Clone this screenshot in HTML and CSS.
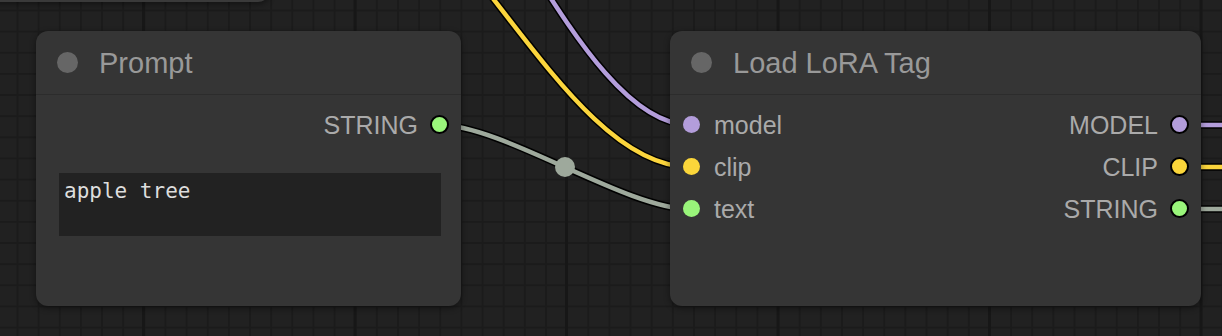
FILE: index.html
```html
<!DOCTYPE html>
<html lang="en">
<head>
<meta charset="UTF-8">
<title>Prompt / Load LoRA Tag</title>
<link rel="stylesheet" href="styles.css">
</head>
<body>
<div class="canvas">
    <!-- links sit under the nodes -->
    <svg class="links" width="1222" height="336" viewBox="0 0 1222 336">
        <g class="outline">
            <path d="M 520 -50 C 565 20, 625 125, 690 125"/>
            <path d="M 462 -40 C 530 40, 605 167, 690 167"/>
            <path d="M 439 125 C 504 125, 625 209, 690 209"/>
            <path d="M 1180 125 H 1240"/>
            <path d="M 1180 167 H 1240"/>
            <path d="M 1180 209 H 1240"/>
        </g>
        <path class="link model" d="M 520 -50 C 565 20, 625 125, 690 125"/>
        <path class="link clip" d="M 462 -40 C 530 40, 605 167, 690 167"/>
        <path class="link string" d="M 439 125 C 504 125, 625 209, 690 209"/>
        <path class="link model" d="M 1180 125 H 1240"/>
        <path class="link clip" d="M 1180 167 H 1240"/>
        <path class="link string" d="M 1180 209 H 1240"/>
        <circle class="link-center" cx="565" cy="167" r="10"/>
    </svg>

    <!-- node above, only its bottom edge shows -->
    <div class="node node-cut"></div>

    <div class="node node-prompt">
        <div class="node-title">
            <span class="title-dot"></span>
            <span class="title-text">Prompt</span>
        </div>
        <div class="node-body">
            <div class="slot-row">
                <div class="slot-in"></div>
                <div class="slot-out">STRING <span class="dot dot-out string"></span></div>
            </div>
            <div class="widget-text">apple tree</div>
        </div>
    </div>

    <div class="node node-lora">
        <div class="node-title">
            <span class="title-dot"></span>
            <span class="title-text">Load LoRA Tag</span>
        </div>
        <div class="node-body">
            <div class="slot-row">
                <div class="slot-in"><span class="dot model"></span> model</div>
                <div class="slot-out">MODEL <span class="dot dot-out model"></span></div>
            </div>
            <div class="slot-row">
                <div class="slot-in"><span class="dot clip"></span> clip</div>
                <div class="slot-out">CLIP <span class="dot dot-out clip"></span></div>
            </div>
            <div class="slot-row">
                <div class="slot-in"><span class="dot string"></span> text</div>
                <div class="slot-out">STRING <span class="dot dot-out string"></span></div>
            </div>
        </div>
    </div>
</div>
</body>
</html>
```

FILE: styles.css
```css
body {
    margin: 0;
    background: #212121;
    font-family: "Liberation Sans", Arial, sans-serif;
}
.canvas {
    position: relative;
    width: 1222px;
    height: 336px;
    overflow: hidden;
    background-color: #212121;
    background-image:
        linear-gradient(90deg, #171717 3px, transparent 3px),
        linear-gradient(90deg, #1b1b1b 2px, transparent 2px),
        linear-gradient(#1b1b1b 2px, transparent 2px);
    background-size: 211.5px 100%, 21.15px 100%, 100% 21.15px;
    background-position: 142px 0, 16.5px 0, 0 9.5px;
}
.links {
    position: absolute;
    left: 0;
    top: 0;
}
.links path {
    fill: none;
}
.outline path {
    stroke: #000;
    stroke-width: 7.5;
}
.link {
    stroke-width: 4.5;
}
.link.model { stroke: #b39ddb; }
.link.clip { stroke: #fbd53c; }
.link.string { stroke: #9ea99c; }
.link-center {
    fill: #9ea99c;
}

.node {
    position: absolute;
    top: 31px;
    height: 275px;
    background: #353535;
    border-radius: 12px;
    box-shadow: 0 2px 6px rgba(0, 0, 0, 0.45);
    display: flex;
    flex-direction: column;
}
.node-cut {
    left: -20px;
    top: -100px;
    width: 290px;
    height: 102px;
    background: #3a3a3a;
}
.node-prompt {
    left: 36px;
    width: 425px;
}
.node-lora {
    left: 670px;
    width: 531px;
}
.node-title {
    height: 64px;
    display: flex;
    align-items: center;
    padding-left: 21px;
    border-bottom: 1px solid #2c2c2c;
    box-sizing: border-box;
    flex-shrink: 0;
}
.title-dot {
    width: 21px;
    height: 21px;
    border-radius: 50%;
    background: #666;
    margin-right: 21px;
}
.title-text {
    font-size: 29px;
    color: #999;
    margin-top: 2px;
}
.node-body {
    padding: 8px 12px 0 13px;
}
.slot-row {
    height: 42px;
    display: flex;
    align-items: center;
    justify-content: space-between;
    font-size: 25px;
    color: #aaa;
}
.slot-in, .slot-out {
    display: flex;
    align-items: center;
    padding-top: 2px;
}
.dot {
    width: 17px;
    height: 17px;
    border-radius: 50%;
    margin-right: 14px;
    margin-top: -2px;
}
.dot-out {
    width: 15px;
    height: 15px;
    border: 2px solid #000;
    margin-right: 0;
    margin-left: 12px;
}
.dot.model { background: #b39ddb; }
.dot.clip { background: #fbd63a; }
.dot.string { background: #99f57a; }

.widget-text {
    margin: 28px 8px 0 10px;
    height: 63px;
    box-sizing: border-box;
    padding: 6px 5px;
    background: #222;
    color: #ddd;
    font-family: "DejaVu Sans Mono", "Liberation Mono", monospace;
    font-size: 21px;
    line-height: 24px;
}
```
